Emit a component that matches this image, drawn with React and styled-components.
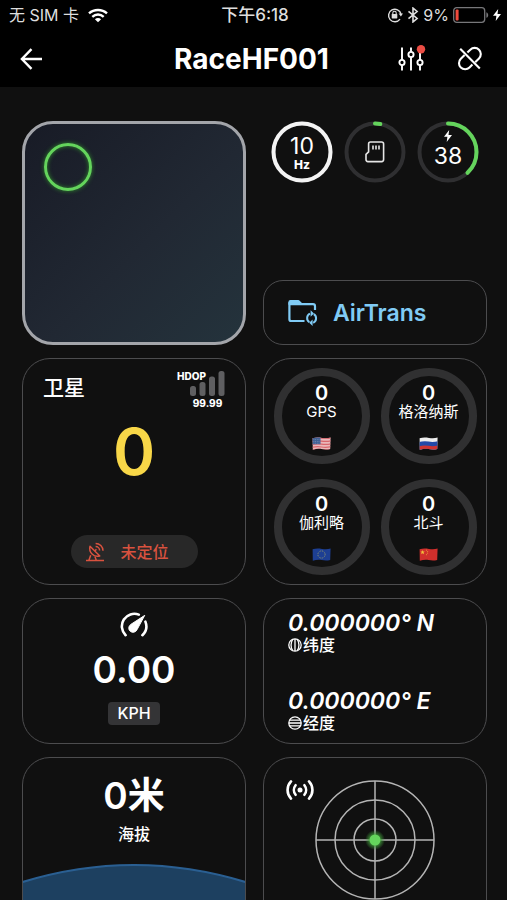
import styled, { createGlobalStyle } from "styled-components";

const GlobalStyle = createGlobalStyle`
  * {
    box-sizing: border-box;
  }

  body {
    margin: 0;
    background-color: #101010;
    color: #ffffff;
    font-family: Inter, "Noto Sans CJK SC", sans-serif;
  }

  button {
    font-family: inherit;
    color: inherit;
    cursor: pointer;
  }

  svg {
    display: block;
    flex-shrink: 0;
  }
`;

const Screen = styled.div`
  height: 100vh;
  display: flex;
  flex-direction: column;
`;

const Header = styled.header`
  background-color: #000000;
  flex-shrink: 0;
`;

const StatusBar = styled.div`
  height: 30px;
  padding: 0 6px 0 9px;
  display: grid;
  grid-template-columns: 1fr auto 1fr;
  align-items: center;
  font-size: 16px;
  line-height: 30px;
  color: #dedede;
`;

const StatusGroup = styled.div`
  display: flex;
  align-items: center;
  gap: ${({ $gap }) => $gap}px;
  justify-content: ${({ $end }) => ($end ? "flex-end" : "flex-start")};
`;

const Clock = styled.span`
  font-size: 17px;
  font-weight: 500;
`;

const NavBar = styled.nav`
  height: 57px;
  padding: 0 24px 0 20px;
  display: grid;
  grid-template-columns: 1fr auto 1fr;
  align-items: center;
`;

const Title = styled.h1`
  margin: 0;
  font-size: 28px;
  line-height: 36px;
  font-weight: 700;
`;

const NavActions = styled.div`
  display: flex;
  justify-content: flex-end;
  gap: 31px;
`;

const IconButton = styled.button`
  justify-self: start;
  padding: 0;
  border: none;
  background: none;
`;

const Dashboard = styled.main`
  flex: 1;
  min-height: 0;
  overflow-y: auto;
  scrollbar-width: none;
  padding: 34px 20px 24px 22px;
  display: grid;
  grid-template-columns: 1fr 1fr;
  grid-auto-rows: max-content;
  align-content: start;
  gap: 13px 17px;
`;

const Card = styled.section`
  min-width: 0;
  border: 1px solid #4c4c4e;
  border-radius: 28px;
  overflow: hidden;
`;

const MapCard = styled.section`
  aspect-ratio: 1;
  padding: 19px;
  border: 3px solid #a3a5aa;
  border-radius: 31px;
  background: linear-gradient(135deg, #181b26, #212833 55%, #24333c);
`;

const Marker = styled.div`
  width: 48px;
  height: 48px;
  border: 3px solid #64d45c;
  border-radius: 50%;
  box-shadow: 0 0 4px #2f8a2b, inset 0 0 4px #2f8a2b;
`;

const SideColumn = styled.div`
  display: flex;
  flex-direction: column;
  justify-content: space-between;
`;

const Gauges = styled.div`
  display: flex;
  justify-content: center;
  gap: 11px;
`;

const GaugeBox = styled.div`
  display: grid;
  place-items: center;

  > * {
    grid-area: 1 / 1;
  }
`;

const GaugeContent = styled.div`
  padding-top: 2px;
  display: flex;
  flex-direction: column;
  align-items: center;
`;

const ChargeContent = styled(GaugeContent)`
  padding: 0 0 6px;
  gap: 2px;
`;

const GaugeValue = styled.span`
  font-size: 23px;
  line-height: 24px;
`;

const GaugeUnit = styled.span`
  font-size: 12px;
  line-height: 14px;
  font-weight: 800;
`;

const TransferButton = styled.button`
  height: 65px;
  padding: 0 24px;
  display: flex;
  align-items: center;
  gap: 15px;
  border: 1px solid #4c4c4e;
  border-radius: 20px;
  background: none;
  color: #80cbf5;
  font-size: 23px;
  line-height: 28px;
  font-weight: 600;
`;

const SatelliteCard = styled(Card)`
  padding: 12px 20px 16px;
  display: flex;
  flex-direction: column;
  justify-content: space-between;
  align-items: center;
`;

const SatelliteHead = styled.div`
  align-self: stretch;
  display: flex;
  justify-content: space-between;
`;

const CardTitle = styled.h2`
  margin: 0;
  font-size: 21px;
  line-height: 34px;
  font-weight: 500;
`;

const Signal = styled.div`
  display: grid;
  grid-template-columns: 13px 17px 18px;
  font-size: 10px;
  line-height: 10px;
  font-weight: 800;

  > svg {
    grid-area: 1 / 2 / 2 / 4;
  }
`;

const SignalLabel = styled.span`
  grid-area: 1 / 1 / 2 / 3;
`;

const SignalValue = styled.span`
  grid-area: 2 / 2 / 3 / 4;
  margin-top: 2px;
  text-align: center;
`;

const SatelliteCount = styled.div`
  font-size: 64px;
  line-height: 64px;
  font-weight: 600;
  color: #f8d748;
`;

const FixStatus = styled.div`
  width: 127px;
  height: 33px;
  margin-top: 40px;
  padding-left: 14px;
  display: flex;
  align-items: center;
  gap: 16px;
  border-radius: 17px;
  background-color: #282828;
  color: #d9523f;
  font-size: 16px;
  line-height: 24px;
  font-weight: 500;
`;

const Constellations = styled(Card)`
  padding: 9px 0;
  display: grid;
  grid-template-columns: 96px 96px;
  justify-content: center;
  gap: 15px 11px;
`;

const Constellation = styled.div`
  height: 96px;
  padding-top: 7px;
  display: flex;
  flex-direction: column;
  align-items: center;
  border: 8px solid #303031;
  border-radius: 50%;
  font-size: 15px;
  line-height: 18px;
  white-space: nowrap;

  > strong {
    font-size: 20px;
    line-height: 20px;
    font-weight: 600;
  }

  > svg {
    margin-top: 16px;
  }
`;

const SpeedCard = styled(Card)`
  height: 146px;
  padding-top: 13px;
  display: flex;
  flex-direction: column;
  align-items: center;
`;

const Speed = styled.div`
  margin-top: 11px;
  font-size: 37px;
  line-height: 44px;
  font-weight: 600;
`;

const Unit = styled.div`
  margin-top: 10px;
  padding: 0 9px;
  border-radius: 4px;
  background-color: #343436;
  font-size: 16px;
  line-height: 23px;
  font-weight: 500;
`;

const PositionCard = styled(Card)`
  height: 146px;
  padding: 12px 24px 10px;
  display: flex;
  flex-direction: column;
  justify-content: space-between;
`;

const Coordinate = styled.div`
  font-size: 23px;
  line-height: 24px;
  font-weight: 600;
  font-style: italic;
  white-space: nowrap;
`;

const CoordinateLabel = styled.div`
  display: flex;
  align-items: center;
  gap: 1px;
  font-size: 16px;
  line-height: 20px;
  font-weight: 500;
`;

const AltitudeCard = styled(Card)`
  height: 226px;
  padding-top: 14px;
  display: flex;
  flex-direction: column;
  align-items: center;
`;

const Altitude = styled.div`
  font-size: 37px;
  line-height: 48px;
  font-weight: 600;
`;

const AltitudeLabel = styled.div`
  margin-top: 2px;
  font-size: 16px;
  line-height: 24px;
  font-weight: 500;
`;

const Terrain = styled.svg`
  width: 100%;
  height: 119px;
  margin-top: 18px;
`;

const RadarCard = styled(Card)`
  height: 226px;
  padding: 22px;
  display: grid;
  justify-items: center;
  align-items: start;

  > * {
    grid-area: 1 / 1;
  }

  > svg:first-child {
    justify-self: start;
  }
`;

function Wifi() {
  return (
    <svg width="20" height="15" viewBox="0 0 20 15" fill="none" stroke="#fff" strokeWidth="2.4">
      <path d="M1 5.4C6 .8 14 .8 19 5.4" />
      <path d="M4.3 8.8c3.3-3 8.1-3 11.4 0" />
      <path d="M10 14.3 6.9 11.2c1.8-1.5 4.4-1.5 6.2 0Z" fill="#fff" stroke="none" />
    </svg>
  );
}

function RotationLock() {
  return (
    <svg width="16" height="16" viewBox="0 0 16 16" fill="none" stroke="#dedede" strokeWidth="1.4">
      <path d="M13 12.2A6.3 6.3 0 1 1 14 7" />
      <path d="M11.6 6.6h4.4l-2.1 3Z" fill="#dedede" stroke="none" />
      <rect x="4.7" y="7" width="5.6" height="4.4" rx=".6" fill="#dedede" stroke="none" />
      <path d="M5.8 7.2V6a1.7 1.7 0 0 1 3.4 0v1.2" strokeWidth="1.1" />
    </svg>
  );
}

function Bluetooth() {
  return (
    <svg width="12" height="16" viewBox="0 0 12 16" fill="none" stroke="#dedede" strokeWidth="1.6">
      <path d="m1.5 4.3 8.6 7.2L6 14.9V1.1l4.1 3.4-8.6 7.2" />
    </svg>
  );
}

function Battery() {
  return (
    <svg width="36" height="16" viewBox="0 0 36 16">
      <rect x=".7" y=".7" width="31" height="14.6" rx="3" fill="none" stroke="#77777a" strokeWidth="1.3" />
      <path d="M33.4 5.2c2.4.9 2.4 4.7 0 5.6Z" fill="#77777a" />
      <rect x="2.6" y="2.6" width="3" height="10.8" rx="1" fill="#ef4a3c" />
    </svg>
  );
}

function Bolt({ size }) {
  return (
    <svg width={(size * 2) / 3} height={size} viewBox="0 0 8 12" fill="#fff">
      <path d="M5.2 0 0 6.8h3.4L2.7 12 8 5H4.5Z" />
    </svg>
  );
}

function ArrowBack() {
  return (
    <svg width="23" height="22" viewBox="0 0 23 22" fill="none" stroke="#fff" strokeWidth="2.4">
      <path d="M22 11H2M11.5 1.2 1.9 11l9.6 9.8" />
    </svg>
  );
}

function Sliders() {
  return (
    <svg width="28" height="27" viewBox="0 0 28 27" fill="none" stroke="#fff" strokeWidth="1.9">
      <path d="M4 2.5v12.2M4 20.3v5.2M13 2.5v4.2M13 12.3v13.2M22 4v10.7M22 20.3v5.2" />
      <circle cx="4" cy="17.5" r="2.6" />
      <circle cx="13" cy="9.5" r="2.6" />
      <circle cx="22" cy="17.5" r="2.6" />
      <circle cx="23" cy="4.3" r="4.2" fill="#ea4d44" stroke="none" />
    </svg>
  );
}

function Unlink() {
  return (
    <svg width="26" height="27" viewBox="0 -1 26 27" fill="none" stroke="#fff" strokeWidth="2.1">
      <path d="m10.4 6.6 2.9-2.9a5.9 5.9 0 0 1 8.7 8.7l-3.8 3.8" />
      <path d="m15.4 18.6-2.9 2.9a5.9 5.9 0 0 1-8.7-8.7l3.8-3.8" />
      <path d="m3.2 2.8 19.6 19.6" />
    </svg>
  );
}

function Gauge({ value, color, children }) {
  return (
    <GaugeBox>
      <svg width="62" height="62" viewBox="0 0 62 62" fill="none" strokeWidth="4">
        <circle cx="31" cy="31" r="28.5" stroke="#2f2f31" />
        <circle
          cx="31"
          cy="31"
          r="28.5"
          stroke={color}
          pathLength="100"
          strokeDasharray={`${value} 100`}
          strokeLinecap="round"
          transform="rotate(-90 31 31)"
        />
      </svg>
      {children}
    </GaugeBox>
  );
}

function SdCard() {
  return (
    <svg width="20" height="22" viewBox="0 0 20 22" fill="none" stroke="#e6e6e6" strokeWidth="1.6">
      <path d="M5.4 1h11.2q2 0 2 2v15.6q0 2-2 2H3q-2 0-2-2v-5.2l2.6-2.6V3q0-2 1.8-2Z" />
      <path d="M8 4.6v4M11 4.6v4M14 4.6v4" />
    </svg>
  );
}

function FolderSync() {
  return (
    <svg width="30" height="27" viewBox="0 0 30 27" fill="none" stroke="#80cbf5" strokeWidth="2.2">
      <path d="M16.5 22H3.2Q1.4 22 1.4 20.2V3.2" />
      <path d="M27 11V7.2q0-2-2-2H2" />
      <path d="M.4 5.8V3Q.4 1 2.4 1h7.8q.9 0 1.5.7l2.5 2.6v1.5Z" fill="#80cbf5" stroke="none" />
      <path d="M21.4 23.2a4.9 4.9 0 0 1 .6-8.6M25.8 15.2a4.9 4.9 0 0 1-.6 8.6" strokeWidth="2" />
      <path d="m22.6 11.2 3.4 3.4-3.4 3.2ZM24.6 20.6v6.4l-3.4-3.2Z" fill="#80cbf5" stroke="none" />
    </svg>
  );
}

function SignalBars() {
  return (
    <svg width="35" height="25" viewBox="0 0 35 25" fill="#5f5f61">
      <rect x="0" y="15" width="6" height="10" rx="2.5" />
      <rect x="9.5" y="11" width="6" height="14" rx="2.5" />
      <rect x="19" y="5.5" width="6" height="19.5" rx="2.5" />
      <rect x="28.5" y="0" width="6" height="25" rx="2.5" />
    </svg>
  );
}

function Dish() {
  return (
    <svg width="20" height="20" viewBox="0 0 20 20" fill="none" stroke="#d9523f" strokeWidth="1.5">
      <path d="M1 18.6h18M4 18l1.7-4.8M11.2 18l-1.2-3.2" />
      <path d="M5 4.2a8 8 0 0 0 9.8 9.8Z" strokeLinejoin="round" />
      <path d="m9.8 9 1.6-1.8M10.6 4.6a4 4 0 0 1 4 4M10.6 1.4a7.4 7.4 0 0 1 7.4 7.4" />
    </svg>
  );
}

const WAVE = "M.6 1.2C4 .2 7 .4 10 .9S15.6 1.4 18.6.6L18.2 11.9C15 12.8 12.5 12.6 9.6 12S4 11.8.8 12.8Z";

function Flag({ id, children }) {
  return (
    <svg width="19" height="13" viewBox="0 0 19 13">
      <clipPath id={id}>
        <path d={WAVE} />
      </clipPath>
      <g clipPath={`url(#${id})`}>{children}</g>
    </svg>
  );
}

function UsFlag() {
  return (
    <Flag id="flag-us">
      <path d="M0 0h19v13H0Z" fill="#e9b7b9" />
      <path
        d="M0 1.5q5-1.2 9.5-.4t9.5-.3M0 4.5q5-1.2 9.5-.4t9.5-.3M0 7.5q5-1.2 9.5-.4t9.5-.3M0 10.4q5-1.2 9.5-.4t9.5-.3M0 13q5-1.2 9.5-.4t9.5-.3"
        fill="none"
        stroke="#d9676e"
        strokeWidth="1.2"
      />
      <path d="M0 0h8.5v7.3H0Z" fill="#3f5f93" />
      <path d="M1.5 2.6h6M1.5 4.5h6M1.5 6.2h6" stroke="#8fa3c4" strokeWidth=".6" strokeDasharray=".8 .9" />
    </Flag>
  );
}

function RussiaFlag() {
  return (
    <Flag id="flag-ru">
      <path d="M0 0h19v13H0Z" fill="#eeeeee" />
      <path d="M0 5q5-1.2 9.5-.4t9.5-.3V13H0Z" fill="#2349a8" />
      <path d="M0 9.2q5-1.2 9.5-.4t9.5-.3V13H0Z" fill="#cf3430" />
    </Flag>
  );
}

function EuFlag() {
  return (
    <Flag id="flag-eu">
      <path d="M0 0h19v13H0Z" fill="#1d3f93" />
      <circle cx="9.5" cy="6.5" r="3.6" fill="none" stroke="#8d9470" strokeWidth="1" strokeDasharray="1 .9" />
    </Flag>
  );
}

function ChinaFlag() {
  return (
    <Flag id="flag-cn">
      <path d="M0 0h19v13H0Z" fill="#d02f2c" />
      <path d="m3.6 2 .6 1.5 1.6.1-1.2 1 .4 1.6-1.4-.9-1.4.9.4-1.6-1.2-1 1.6-.1Z" fill="#f1c23c" />
      <path d="M7 2.2h.9M8.2 3.6h.9M8.2 5.2h.9M7 6.7h.9" stroke="#f1b23c" strokeWidth=".8" />
    </Flag>
  );
}

function Speedometer() {
  return (
    <svg width="28" height="25" viewBox="0 0 28 25" fill="none" stroke="#fff" strokeWidth="2.6" strokeLinecap="round">
      <path d="M5.6 23.2A12.5 12.5 0 0 1 18.8 2.6M25.4 9.6a12.5 12.5 0 0 1-3 13.6" />
      <path d="M24.4 3.6 10.8 12.4a4.3 4.3 0 1 0 6.2 5.4Z" fill="#fff" strokeWidth="1" strokeLinejoin="round" />
    </svg>
  );
}

function Globe({ vertical }) {
  return (
    <svg width="14" height="14" viewBox="0 0 14 14" fill="none" stroke="#fff" strokeWidth="1.3">
      <circle cx="7" cy="7" r="6.2" />
      {vertical ? (
        <path d="M7 1v12M4.6 1.5C2.6 5 2.6 9 4.6 12.5M9.4 1.5c2 3.5 2 7.5 0 11" />
      ) : (
        <path d="M1 7h12M1.8 4.2h10.4M1.8 9.8h10.4" />
      )}
    </svg>
  );
}

function Broadcast() {
  return (
    <svg width="28" height="20" viewBox="0 0 28 20" fill="none" stroke="#fff" strokeWidth="2.6" strokeLinecap="round">
      <path d="M5 1.4C.4 6.4.4 13.6 5 18.6M23 1.4c4.6 5 4.6 12.2 0 17.2" />
      <path d="M9.6 5.2a7.6 7.6 0 0 0 0 9.6M18.4 5.2a7.6 7.6 0 0 1 0 9.6" />
      <circle cx="14" cy="10" r="2.5" fill="#fff" stroke="none" />
    </svg>
  );
}

function Radar() {
  return (
    <svg width="120" height="120" viewBox="0 0 120 120" fill="none" stroke="#b4b4b4" strokeWidth="1.5">
      <defs>
        <radialGradient id="glow">
          <stop offset=".4" stopColor="#3f9c3a" />
          <stop offset="1" stopColor="#3f9c3a" stopOpacity="0" />
        </radialGradient>
      </defs>
      <circle cx="60" cy="60" r="59" />
      <circle cx="60" cy="60" r="40" />
      <circle cx="60" cy="60" r="21" />
      <path d="M60 1v118M1 60h118" />
      <circle cx="60" cy="60" r="10" fill="url(#glow)" stroke="none" />
      <circle cx="60" cy="60" r="5.5" fill="#64d45c" stroke="none" />
    </svg>
  );
}

const constellations = [
  { name: "GPS", count: 0, Icon: UsFlag },
  { name: "格洛纳斯", count: 0, Icon: RussiaFlag },
  { name: "伽利略", count: 0, Icon: EuFlag },
  { name: "北斗", count: 0, Icon: ChinaFlag },
];

export default function App() {
  return (
    <Screen>
      <GlobalStyle />
      <Header>
        <StatusBar>
          <StatusGroup $gap={9}>
            <span>无 SIM 卡</span>
            <Wifi />
          </StatusGroup>
          <Clock>下午6:18</Clock>
          <StatusGroup $gap={4} $end>
            <RotationLock />
            <Bluetooth />
            <span>9%</span>
            <Battery />
            <Bolt size={12} />
          </StatusGroup>
        </StatusBar>
        <NavBar>
          <IconButton aria-label="返回">
            <ArrowBack />
          </IconButton>
          <Title>RaceHF001</Title>
          <NavActions>
            <IconButton aria-label="设置">
              <Sliders />
            </IconButton>
            <IconButton aria-label="断开连接">
              <Unlink />
            </IconButton>
          </NavActions>
        </NavBar>
      </Header>

      <Dashboard>
        <MapCard>
          <Marker />
        </MapCard>
        <SideColumn>
          <Gauges>
            <Gauge value={100} color="#f4f4f4">
              <GaugeContent>
                <GaugeValue>10</GaugeValue>
                <GaugeUnit>Hz</GaugeUnit>
              </GaugeContent>
            </Gauge>
            <Gauge value={3} color="#64d45c">
              <SdCard />
            </Gauge>
            <Gauge value={38} color="#64d45c">
              <ChargeContent>
                <Bolt size={12} />
                <GaugeValue>38</GaugeValue>
              </ChargeContent>
            </Gauge>
          </Gauges>
          <TransferButton>
            <FolderSync />
            AirTrans
          </TransferButton>
        </SideColumn>

        <SatelliteCard>
          <SatelliteHead>
            <CardTitle>卫星</CardTitle>
            <Signal>
              <SignalBars />
              <SignalLabel>HDOP</SignalLabel>
              <SignalValue>99.99</SignalValue>
            </Signal>
          </SatelliteHead>
          <SatelliteCount>0</SatelliteCount>
          <FixStatus>
            <Dish />
            未定位
          </FixStatus>
        </SatelliteCard>
        <Constellations>
          {constellations.map(({ name, count, Icon }) => (
            <Constellation key={name}>
              <strong>{count}</strong>
              <span>{name}</span>
              <Icon />
            </Constellation>
          ))}
        </Constellations>

        <SpeedCard>
          <Speedometer />
          <Speed>0.00</Speed>
          <Unit>KPH</Unit>
        </SpeedCard>
        <PositionCard>
          <div>
            <Coordinate>0.000000° N</Coordinate>
            <CoordinateLabel>
              <Globe vertical />
              纬度
            </CoordinateLabel>
          </div>
          <div>
            <Coordinate>0.000000° E</Coordinate>
            <CoordinateLabel>
              <Globe />
              经度
            </CoordinateLabel>
          </div>
        </PositionCard>

        <AltitudeCard>
          <Altitude>0米</Altitude>
          <AltitudeLabel>海拔</AltitudeLabel>
          <Terrain viewBox="0 0 222 119" preserveAspectRatio="none">
            <path d="M-2 18.5Q111-16.5 224 18.5V122H-2Z" fill="#1d4060" stroke="#2a5f92" strokeWidth="2" />
          </Terrain>
        </AltitudeCard>
        <RadarCard>
          <Broadcast />
          <Radar />
        </RadarCard>
      </Dashboard>
    </Screen>
  );
}
